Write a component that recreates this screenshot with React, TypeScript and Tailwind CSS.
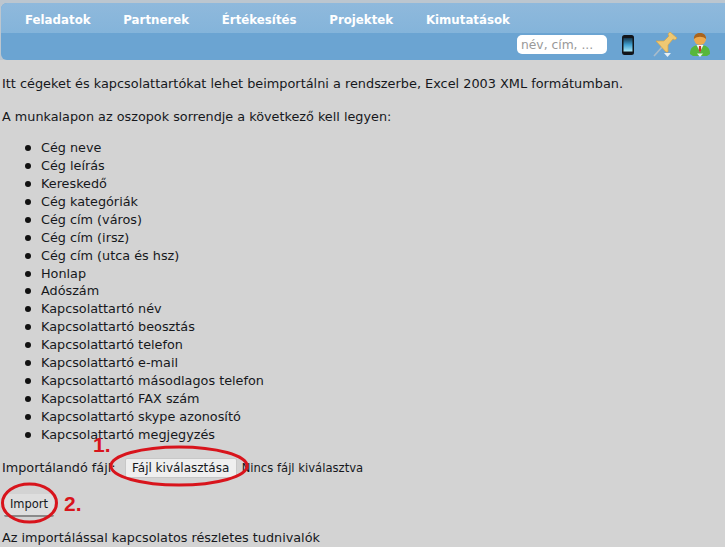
import React from 'react';

const columns = [
  'Cég neve',
  'Cég leírás',
  'Kereskedő',
  'Cég kategóriák',
  'Cég cím (város)',
  'Cég cím (irsz)',
  'Cég cím (utca és hsz)',
  'Honlap',
  'Adószám',
  'Kapcsolattartó név',
  'Kapcsolattartó beosztás',
  'Kapcsolattartó telefon',
  'Kapcsolattartó e-mail',
  'Kapcsolattartó másodlagos telefon',
  'Kapcsolattartó FAX szám',
  'Kapcsolattartó skype azonosító',
  'Kapcsolattartó megjegyzés',
];

const menu = ['Feladatok', 'Partnerek', 'Értékesítés', 'Projektek', 'Kimutatások'];

const PhoneIcon = () => (
  <svg width="14" height="20" viewBox="0 0 14 20" className="block">
    <defs>
      <linearGradient id="phoneScreen" x1="0" y1="0" x2="0" y2="1">
        <stop offset="0" stopColor="#16384f" />
        <stop offset="0.5" stopColor="#3f9fcf" />
        <stop offset="1" stopColor="#a8e6f5" />
      </linearGradient>
    </defs>
    <rect x="1" y="0" width="12" height="20" rx="2.5" fill="#12151a" />
    <rect x="2.5" y="3" width="9" height="13.5" fill="url(#phoneScreen)" />
  </svg>
);

const PinIcon = () => (
  <svg width="24" height="25" viewBox="0 0 24 25" className="block">
    <path d="M1 24 L10 14" stroke="#a9bccb" strokeWidth="1.6" />
    <path d="M3 9 L11 9 L16 4 L15 2 L17 0 L24 6 L22 8 L20 7 L15 13 L15 20 L13 20 Z" fill="#efc873" stroke="#d9a545" strokeWidth="0.7" />
    <path d="M11 21 L18 21 L14.5 25 Z" fill="#e6f0f7" />
  </svg>
);

const UserIcon = () => (
  <svg width="20" height="25" viewBox="0 0 20 25" className="block">
    <path d="M0 22 C0 15 4 13 10 13 C16 13 20 15 20 22 L17 24 L3 24 Z" fill="#57b73a" />
    <path d="M6.5 13 L13.5 13 L10 20 Z" fill="#f4f4f4" />
    <path d="M9 14 L11 14 L11.2 18 L10 21 L8.8 18 Z" fill="#c9302c" />
    <circle cx="10" cy="7" r="6" fill="#eda94e" />
    <path d="M4 7 C3 -1 17 -1 16 7 C13 4 7 4 4 7 Z" fill="#a8641e" />
    <path d="M7 21.5 L13 21.5 L10 25 Z" fill="#e9f3ef" />
  </svg>
);

const App: React.FC = () => {
  return (
    <div className="relative h-[547px] w-[725px] overflow-hidden bg-[#d3d3d3] font-['DejaVu_Sans',sans-serif] text-[12.8px] leading-[18px] text-[#16181c]">
      {/* top menu */}
      <div className="bg-[#bcc6cf] pl-px pt-[3px]">
        <div className="h-[57px] rounded-l-[6px] bg-[#6ba4d2]">
          <div className="flex h-[30px] items-center gap-[32.7px] rounded-tl-[6px] bg-gradient-to-b from-[#8fb9dc] to-[#84b4da] pl-[24px] pt-[4px] text-[11.8px] font-bold text-white">
            {menu.map(item => (
              <span key={item}>{item}</span>
            ))}
          </div>
          <div className="flex h-[23px] items-center justify-end pr-[15px]">
            <input
              readOnly
              placeholder="név, cím, ..."
              className="mr-[14px] h-[19px] w-[90px] rounded-[5px] bg-white px-[4px] text-[12.3px] outline-none placeholder:text-[#999]"
            />
            <div className="mr-[18px]"><PhoneIcon /></div>
            <div className="mr-[13px]"><PinIcon /></div>
            <UserIcon />
          </div>
        </div>
      </div>

      {/* content */}
      <div className="px-[2px]">
        <p className="mt-[15px] text-[12.86px]">Itt cégeket és kapcsolattartókat lehet beimportálni a rendszerbe, Excel 2003 XML formátumban.</p>
        <p className="mt-[15px]">A munkalapon az oszopok sorrendje a következő kell legyen:</p>
        <ul className="mt-[13px] pl-[23px]">
          {columns.map(col => (
            <li key={col} className="flex h-[17.94px] items-center">
              <span className="mr-[10px] h-[6px] w-[6px] rounded-full bg-[#111]" />
              {col}
            </li>
          ))}
        </ul>
        <div className="mt-[14px] flex items-center">
          <span>Importálandó fájl:</span>
          <button className="ml-[9px] h-[20px] w-[112px] rounded-[2px] border border-[#c8c8c8] bg-[#efefef] text-[12px]">Fájl kiválasztása</button>
          <span className="ml-[5px] text-[11.6px]">Nincs fájl kiválasztva</span>
        </div>
        <button className="ml-[2px] mt-[16px] h-[23px] w-[50px] rounded-[2px] border-b-2 border-[#8a8a8a] bg-[#dedede] text-[11.5px]">Import</button>
        <p className="mt-[12px]">Az importálással kapcsolatos részletes tudnivalók</p>
      </div>

      {/* red annotations drawn over the screenshot */}
      <svg className="absolute left-0 top-0" width="725" height="547" fill="none" stroke="#d8141c" strokeWidth="3">
        <ellipse cx="179" cy="466" rx="68" ry="19" />
        <ellipse cx="29.5" cy="503" rx="27" ry="19" />
      </svg>
      <span className="absolute left-[93px] top-[436px] font-['Liberation_Sans',sans-serif] text-[21px] font-bold text-[#d8141c]">1.</span>
      <span className="absolute left-[64px] top-[495px] font-['Liberation_Sans',sans-serif] text-[21px] font-bold text-[#d8141c]">2.</span>
    </div>
  );
};

export default App;
